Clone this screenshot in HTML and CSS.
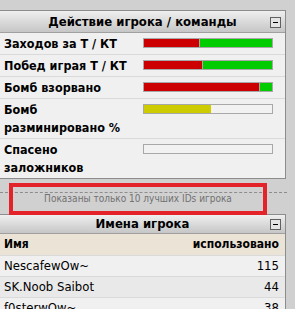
FILE: index.html
```html
<!DOCTYPE html>
<html lang="ru">
  <head>
    <meta charset="UTF-8" />
    <meta name="viewport" content="width=device-width, initial-scale=1.0" />
    <title>Статистика игрока</title>
    <link rel="stylesheet" href="styles.css">
  </head>
  <body>
    <div class="panel">
      <div class="panel-head">
        <span class="panel-title">Действие игрока / команды</span>
        <span class="toggle"></span>
      </div>
      <table class="stats">
        <tr>
          <th>Заходов за Т / КТ</th>
          <td><div class="bar"><span class="red" style="width: 43%"></span><span class="green"></span></div></td>
        </tr>
        <tr>
          <th>Побед играя Т / КТ</th>
          <td><div class="bar"><span class="red" style="width: 45%"></span><span class="green"></span></div></td>
        </tr>
        <tr>
          <th>Бомб взорвано</th>
          <td><div class="bar"><span class="red" style="width: 90%"></span><span class="green"></span></div></td>
        </tr>
        <tr>
          <th>Бомб<br>разминировано %</th>
          <td><div class="bar"><span class="yellow" style="width: 52%"></span></div></td>
        </tr>
        <tr>
          <th>Спасено<br>заложников</th>
          <td><div class="bar"></div></td>
        </tr>
      </table>
    </div>

    <div class="notice">
      <div class="notice-box">Показаны только 10 лучших IDs игрока</div>
    </div>

    <div class="panel">
      <div class="panel-head small">
        <span class="panel-title">Имена игрока</span>
        <span class="toggle"></span>
      </div>
      <table class="names">
        <tr class="cols">
          <th>Имя</th>
          <th class="num">использовано</th>
        </tr>
        <tr>
          <td>NescafewOw~</td>
          <td class="num">115</td>
        </tr>
        <tr class="alt">
          <td>SK.Noob Saibot</td>
          <td class="num">44</td>
        </tr>
        <tr>
          <td>f0sterwOw~</td>
          <td class="num">38</td>
        </tr>
      </table>
    </div>
  </body>
</html>
```

FILE: styles.css
```css
body {
  font-family: "DejaVu Sans", "Liberation Sans", sans-serif;
  font-stretch: condensed;
  font-size: 13px;
  background-color: #d0d0d0;
  color: #000;
  margin: 0;
  padding: 10px 0 0 0;
  overflow: hidden;
}
.panel {
  width: 285px;
  margin-left: -1px;
  border: 1px solid #8c8c8c;
  background: #f0f0f0;
}
.panel-head {
  position: relative;
  height: 21px;
  line-height: 21px;
  text-align: center;
  background: linear-gradient(#efefef, #c6c6c6);
  border-bottom: 1px solid #a0a0a0;
}
.panel-head.small {
  height: 18px;
  line-height: 18px;
}
.panel-title {
  font-weight: bold;
  font-size: 13px;
}
.toggle {
  position: absolute;
  right: 4px;
  top: 6px;
  width: 9px;
  height: 9px;
  border: 1px solid #606060;
  background: #e4e4e4;
}
.small .toggle {
  top: 4px;
}
.toggle::after {
  content: "";
  position: absolute;
  left: 2px;
  top: 4px;
  width: 5px;
  height: 1px;
  background: #000;
}
table {
  width: 100%;
  border-collapse: collapse;
}
.stats th {
  text-align: left;
  width: 135px;
  padding: 2px 4px 1px;
  font-size: 12.5px;
  line-height: 18px;
  vertical-align: top;
}
.stats td {
  vertical-align: top;
  padding: 5px 12px 0 0;
}
.stats tr + tr th,
.stats tr + tr td {
  border-top: 1px solid #dadada;
}
.bar {
  display: flex;
  height: 8px;
  border: 1px solid #a8a8a8;
  background: #f2f2f2;
}
.bar span {
  height: 100%;
}
.bar .red {
  background: #cc0000;
  border-right: 1px solid #a8a8a8;
}
.bar .green {
  flex: 1;
  background: #00cc00;
}
.bar .yellow {
  background: #cccc00;
}
.notice {
  position: relative;
  padding: 4px 0 0 9px;
  height: 31px;
}
.notice::before {
  content: "";
  position: absolute;
  left: 0;
  right: 8px;
  top: 13px;
  border-top: 1px dashed #8c8c8c;
}
.notice-box {
  position: relative;
  width: 250px;
  height: 24px;
  line-height: 24px;
  border: 4px solid #e3222a;
  text-align: center;
  font-size: 10px;
  color: #707070;
}
.names th,
.names td {
  padding: 1px 4px;
  line-height: 18px;
  text-align: left;
}
.names th {
  font-size: 12px;
  line-height: 19px;
}
.names .num {
  text-align: right;
  padding-right: 6px;
}
.names .cols {
  background: #ebe3d6;
}
.names tr + tr td {
  border-top: 1px solid #dadada;
}
.names .alt {
  background: #e9e9e9;
}
```
